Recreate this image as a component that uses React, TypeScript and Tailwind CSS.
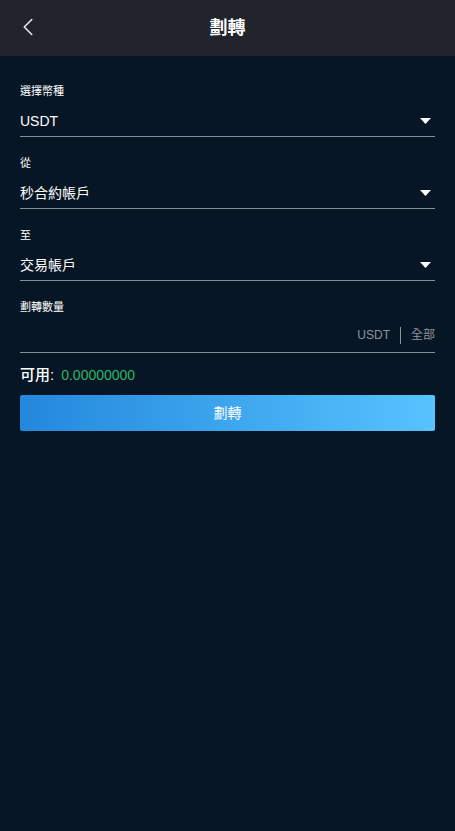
import { ChevronLeft } from "lucide-react";

const font = { fontFamily: '"Liberation Sans", "Noto Sans CJK TC", sans-serif' };

function Caret() {
  return (
    <svg width="11" height="6" viewBox="0 0 11 6" className="mr-[4px]">
      <path d="M0 0 H11 L5.5 6 Z" fill="#ffffff" />
    </svg>
  );
}

function SelectField({ label, value }: { label: string; value: string }) {
  return (
    <div className="pt-[19px] first:pt-0">
      <p className="text-[11px] leading-[14px] text-white">{label}</p>
      <div className="flex items-center justify-between pt-[14px] pb-[6px] border-b border-[#8a8f96]">
        <span className="text-[14px] leading-[18px] text-white">{value}</span>
        <Caret />
      </div>
    </div>
  );
}

export default function App() {
  return (
    <div className="w-[455px] h-[831px] bg-[#071624]" style={font}>
      {/* Header */}
      <div className="h-[56px] bg-[#22242c] flex items-center relative">
        <button className="absolute left-[13px] top-[12px] text-[#e5e7eb]">
          <ChevronLeft className="w-[30px] h-[30px]" strokeWidth={1.3} />
        </button>
        <h1 className="flex-1 text-center text-[18px] font-bold text-white">劃轉</h1>
      </div>

      <div className="px-[20px] pt-[28px]">
        <div>
          <SelectField label="選擇幣種" value="USDT" />
          <SelectField label="從" value="秒合約帳戶" />
          <SelectField label="至" value="交易帳戶" />
        </div>

        {/* Amount */}
        <div className="pt-[19px]">
          <p className="text-[11px] leading-[14px] text-white">劃轉數量</p>
          <div className="flex items-center pt-[12px] pb-[8px] border-b border-[#8a8f96]">
            <input className="flex-1 min-w-0 bg-transparent outline-none text-white text-[14px] leading-[18px]" />
            <span className="text-[12px] leading-[18px] text-[#8e939b]">USDT</span>
            <span className="mx-[10px] w-px h-[17px] bg-[#8e939b]" />
            <span className="text-[12px] leading-[18px] text-[#8e939b]">全部</span>
          </div>
        </div>

        <div className="flex items-center mt-[12px] leading-[20px]">
          <span className="text-[15px] font-medium text-white">可用:</span>
          <span className="ml-[7px] text-[14px] text-[#2eb566]">0.00000000</span>
        </div>

        <button className="mt-[10px] w-full h-[36px] rounded-[2px] bg-gradient-to-r from-[#2388dc] to-[#56c3ff] text-white text-[14px]">
          劃轉
        </button>
      </div>
    </div>
  );
}
